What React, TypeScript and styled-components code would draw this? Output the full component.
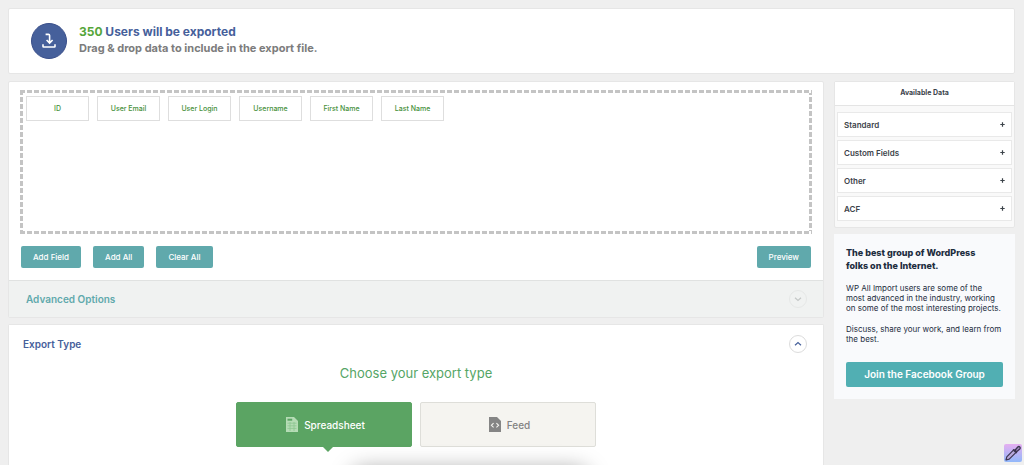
import React from "react";
import styled, { createGlobalStyle } from "styled-components";

const Global = createGlobalStyle`
  *, *::before, *::after { box-sizing: border-box; }
  body { margin: 0; background: #efefef; font-family: Inter, "Liberation Sans", sans-serif; color: #3c434a; }
  h1, h2, h3, p, ul { margin: 0; padding: 0; }
  button { font-family: inherit; cursor: pointer; }
`;

const Page = styled.div`
  display: flex;
  flex-direction: column;
  gap: 7px;
  min-height: 100vh;
  padding: 8px 9px 0 8px;
`;

const Panel = styled.section`
  background: #fff;
  border: 1px solid #e6e6e6;
  border-radius: 2px;
`;

const Header = styled(Panel).attrs({ as: "header" })`
  display: flex;
  align-items: center;
  gap: 12px;
  height: 66px;
  padding: 0 22px;
`;

const Badge = styled.div`
  display: grid;
  place-items: center;
  width: 36px;
  height: 36px;
  border: 1px solid #3a4f8a;
  border-radius: 50%;
  background: #46609b;
`;

const Title = styled.h1`
  font-size: 12px;
  line-height: 16px;
  font-weight: 700;
  color: #46609b;
  strong { color: #55a63a; font-weight: inherit; }
`;

const Subtitle = styled.p`
  padding-bottom: 2px;
  font-size: 11px;
  line-height: 16px;
  font-weight: 700;
  color: #7c7c7c;
`;

const Columns = styled.div`
  display: flex;
  flex: 1;
  gap: 10px;
`;

const Main = styled.main`
  display: flex;
  flex: 1;
  flex-direction: column;
  gap: 6px;
  min-width: 0;
`;

const Side = styled.aside`
  display: flex;
  flex-direction: column;
  gap: 6px;
  width: 181px;
`;

const Builder = styled.div`
  padding: 8px 11px 12px;
`;

const DropZone = styled.ul`
  display: flex;
  align-items: flex-start;
  gap: 8px;
  height: 144px;
  --h: repeating-linear-gradient(90deg, #c4c4c4 0 5px, #fff 5px 7px);
  --v: repeating-linear-gradient(180deg, #c4c4c4 0 5px, #fff 5px 7px);
  background:
    var(--h) top / 100% 3px no-repeat,
    var(--h) bottom / 100% 3px no-repeat,
    var(--v) left / 3px 100% no-repeat,
    var(--v) right / 3px 100% no-repeat;
  && { padding: 6px; }
  list-style: none;
`;

const Field = styled.li`
  display: grid;
  place-items: center;
  width: 63px;
  height: 25px;
  border: 1px solid #dedede;
  background: #fff;
  color: #46903a;
  font-size: 7px;
  font-weight: 500;
  white-space: nowrap;
`;

const Actions = styled.div`
  display: flex;
  gap: 12px;
  padding: 12px 1px 0;
`;

const Action = styled.button<{ $end?: boolean }>`
  height: 22px;
  padding: 0 12px;
  border: 0;
  border-radius: 2px;
  background: #60a9ac;
  color: #fff;
  font-size: 8px;
  font-weight: 500;
  margin-left: ${(p) => (p.$end ? "auto" : "0")};
`;

const SectionBar = styled.div<{ $muted?: boolean }>`
  display: flex;
  align-items: center;
  justify-content: space-between;
  height: 37px;
  padding: ${(p) => (p.$muted ? "0 16px 0 17px" : "0 16px 0 14px")};
  background: ${(p) => (p.$muted ? "#f0f2f1" : "#fff")};
  border-top: ${(p) => (p.$muted ? "1px solid #e0e2e1" : "0")};
`;

const SectionTitle = styled.h2<{ $teal?: boolean }>`
  font-size: 10px;
  line-height: 16px;
  font-weight: 600;
  color: ${(p) => (p.$teal ? "#60a9ac" : "#46609b")};
`;

const Toggle = styled.button<{ $muted?: boolean }>`
  display: grid;
  place-items: center;
  width: 18px;
  height: 18px;
  padding: 0;
  border: 1px solid ${(p) => (p.$muted ? "#e6e8e7" : "#dcdcdc")};
  border-radius: 50%;
  background: transparent;
  color: ${(p) => (p.$muted ? "#c4c8c7" : "#46609b")};
`;

const ExportPanel = styled(Panel)`
  flex: 1;
  border-bottom: 0;
  border-radius: 2px 2px 0 0;
`;

const Prompt = styled.h3`
  text-align: center;
  font-size: 13px;
  line-height: 22px;
  font-weight: 400;
  color: #55a566;
`;

const Choices = styled.div`
  display: flex;
  justify-content: center;
  gap: 8px;
  padding: 18px 0 16px;
`;

const Choice = styled.button<{ $active?: boolean }>`
  position: relative;
  display: flex;
  align-items: center;
  justify-content: center;
  gap: 6px;
  width: 176px;
  height: 45px;
  padding: 0 0 0 3px;
  border: 1px solid ${(p) => (p.$active ? "#5ba463" : "#deded9")};
  border-radius: 2px;
  background: ${(p) => (p.$active ? "#5ba463" : "#f5f4f0")};
  color: ${(p) => (p.$active ? "#fff" : "#838383")};
  font-size: 10px;
  font-weight: 500;
  &::after {
    content: "";
    display: ${(p) => (p.$active ? "block" : "none")};
    position: absolute;
    top: 100%;
    left: calc(50% - 2px);
    border: 6px solid transparent;
    border-top-color: #5ba463;
  }
`;

const DataPanel = styled(Panel)`
  background: #f9f9f9;
`;

const DataTitle = styled.h2`
  height: 24px;
  border-bottom: 1px solid #e4e4e4;
  background: #fff;
  text-align: center;
  font-size: 7px;
  line-height: 22px;
  font-weight: 700;
`;

const DataList = styled.div`
  display: flex;
  flex-direction: column;
  gap: 3px;
  padding: 6px 2px;
`;

const DataGroup = styled.button`
  display: flex;
  align-items: center;
  justify-content: space-between;
  height: 25px;
  padding: 0 6px;
  border: 1px solid #e9e9e9;
  background: #fff;
  color: #3c434a;
  font-size: 8px;
  font-weight: 600;
`;

const Promo = styled.section`
  padding: 12px;
  background: #f9fafc;
  color: #1d2d3e;
`;

const PromoTitle = styled.h2`
  font-size: 9px;
  line-height: 13px;
  font-weight: 800;
  white-space: nowrap;
`;

const PromoText = styled.p`
  && { padding-top: 11px; }
  font-size: 8px;
  line-height: 10px;
  white-space: nowrap;
`;

const Join = styled.a`
  display: block;
  height: 25px;
  margin-top: 18px;
  border-radius: 2px;
  background: #51afb3;
  color: #fff;
  text-align: center;
  text-decoration: none;
  font-size: 10px;
  line-height: 25px;
  font-weight: 600;
`;

const Picker = styled.button`
  position: fixed;
  right: 2px;
  bottom: 3px;
  width: 18px;
  height: 18px;
  padding: 0;
  border: 0;
  border-radius: 2px;
  background: linear-gradient(#e5aef0, #92b8fa);
  svg { display: block; }
`;

const DockShadow = styled.div`
  position: fixed;
  top: calc(100% + 6px);
  left: calc(50% - 158px);
  width: 232px;
  height: 40px;
  border-radius: 8px;
  box-shadow: 0 0 22px 2px rgba(0, 0, 0, 0.36);
`;

const Chevron = ({ up }: { up?: boolean }) => (
  <svg width="8" height="8" viewBox="0 0 8 8" fill="none" stroke="currentColor" strokeWidth="1.2">
    <path d={up ? "M1 5.3 4 2.6 7 5.3" : "M1 2.7 4 5.4 7 2.7"} />
  </svg>
);

const Plus = () => (
  <svg width="5" height="5" viewBox="0 0 5 5" stroke="currentColor" strokeWidth="1.2" aria-hidden="true">
    <path d="M2.5 .3v4.4M.3 2.5h4.4" />
  </svg>
);

const ExportIcon = () => (
  <svg width="16" height="16" viewBox="0 0 16 16" fill="none" stroke="#fff" strokeWidth="1.6">
    <path d="M2 11.2v2.2q0 .6.6.6h10.8q.6 0 .6-.6v-2.2" />
    <path d="M4.6 1.4h2.8q1.2 0 1.2 1.2V9.6M5.6 7 8.6 10 11.6 7" />
  </svg>
);

const SheetIcon = () => (
  <svg width="12" height="15" viewBox="0 0 12 15">
    <path d="M0 0h8l4 4v11H0z" fill="#b5dcb5" />
    <path d="M1.5 1.7h4.7v2H1.5z" fill="#5ba463" />
    <path d="M1.5 6.2h9M1.5 8.8h9M1.5 11.4h9M4 5v9M8 5v9" stroke="#8cc691" strokeWidth=".8" />
  </svg>
);

const FeedIcon = () => (
  <svg width="12" height="15" viewBox="0 0 12 15">
    <path d="M0 0h8l4 4v11H0z" fill="#858585" />
    <path d="M4.6 6.2 2.4 8.3l2.2 2.1M7.4 6.2l2.2 2.1-2.2 2.1" fill="none" stroke="#f5f4f0" strokeWidth="1.1" />
  </svg>
);

const PipetteIcon = () => (
  <svg width="18" height="18" viewBox="0 0 18 18" fill="none" stroke="#3d3550" strokeLinejoin="round">
    <path d="M9.4 6.2 2.8 12.8 2 16l3.2-.8 6.6-6.6" fill="#b9a9dd" strokeWidth="1.2" />
    <path d="M11 6.2 13.8 3a1.4 1.4 0 0 1 2 2L12.6 7.8z" fill="#a58cc4" strokeWidth="1.3" />
    <path d="M9.8 6l2.4 2.4" strokeWidth="2" strokeLinecap="round" />
  </svg>
);

const fields = ["ID", "User Email", "User Login", "Username", "First Name", "Last Name"];
const groups = ["Standard", "Custom Fields", "Other", "ACF"];

export default function App() {
  return (
    <>
      <Global />
      <Page>
        <Header>
          <Badge><ExportIcon /></Badge>
          <div>
            <Title><strong>350</strong> Users will be exported</Title>
            <Subtitle>Drag &amp; drop data to include in the export file.</Subtitle>
          </div>
        </Header>
        <Columns>
          <Main>
            <Panel>
              <Builder>
                <DropZone>
                  {fields.map((f) => <Field key={f}>{f}</Field>)}
                </DropZone>
                <Actions>
                  <Action>Add Field</Action>
                  <Action>Add All</Action>
                  <Action>Clear All</Action>
                  <Action $end>Preview</Action>
                </Actions>
              </Builder>
              <SectionBar $muted>
                <SectionTitle $teal>Advanced Options</SectionTitle>
                <Toggle $muted aria-label="Expand advanced options"><Chevron /></Toggle>
              </SectionBar>
            </Panel>
            <ExportPanel>
              <SectionBar>
                <SectionTitle>Export Type</SectionTitle>
                <Toggle aria-label="Collapse export type"><Chevron up /></Toggle>
              </SectionBar>
              <Prompt>Choose your export type</Prompt>
              <Choices>
                <Choice $active><SheetIcon />Spreadsheet</Choice>
                <Choice><FeedIcon />Feed</Choice>
              </Choices>
            </ExportPanel>
          </Main>
          <Side>
            <DataPanel>
              <DataTitle>Available Data</DataTitle>
              <DataList>
                {groups.map((g) => (
                  <DataGroup key={g}>{g}<Plus /></DataGroup>
                ))}
              </DataList>
            </DataPanel>
            <Promo>
              <PromoTitle>The best group of WordPress<br />folks on the Internet.</PromoTitle>
              <PromoText>
                WP All Import users are some of the<br />most advanced in the industry, working<br />on some of the most interesting projects.
              </PromoText>
              <PromoText>Discuss, share your work, and learn from<br />the best.</PromoText>
              <Join href="#group">Join the Facebook Group</Join>
            </Promo>
          </Side>
        </Columns>
      </Page>
      <DockShadow />
      <Picker aria-label="Pick a color"><PipetteIcon /></Picker>
    </>
  );
}
